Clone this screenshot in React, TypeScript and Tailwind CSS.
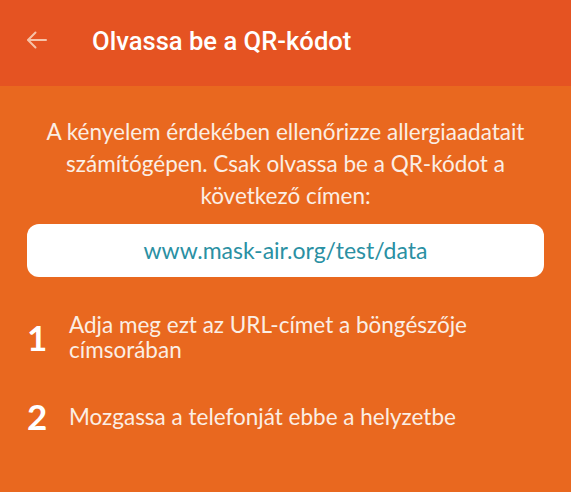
import React from "react";

export default function App() {
  return (
    <div className="w-[571px] h-[492px] overflow-hidden bg-[#e9681f] flex flex-col" style={{ fontFamily: "Lato, 'Noto Sans', sans-serif" }}>
      <div className="h-[86px] bg-[#e55322] flex items-center shrink-0">
        <div className="w-[92px] pl-[25px] pb-[6px] flex items-center">
          <svg width="24" height="24" viewBox="0 0 24 24" fill="none" stroke="#f6c2a8" strokeWidth="2" strokeLinecap="round" strokeLinejoin="round">
            <path d="M21 12H3.5" />
            <path d="M10.5 4.5L3 12l7.5 7.5" />
          </svg>
        </div>
        <div className="text-white text-[25.6px] font-medium pb-[3px]" style={{ fontFamily: "Roboto, sans-serif" }}>
          Olvassa be a QR-kódot
        </div>
      </div>
      <div className="px-[27px] pt-[30px] flex flex-col">
        <p className="text-center text-[#fbeee4] text-[22.5px] leading-[32px]">
          A kényelem érdekében ellenőrizze allergiaadatait
          <br />
          számítógépen. Csak olvassa be a QR-kódot a
          <br />
          következő címen:
        </p>
        <div className="mt-[12px] h-[53px] bg-white rounded-[12px] flex items-center justify-center text-[23px] text-[#2a90a3]">
          www.mask-air.org/test/data
        </div>
        <div className="mt-[35px] flex items-center gap-[20px]">
          <div className="w-[22px] text-white text-[35px] font-bold leading-none">1</div>
          <div className="text-[#fbeee4] text-[22.5px] leading-[25px]">
            Adja meg ezt az URL-címet a böngészője
            <br />
            címsorában
          </div>
        </div>
        <div className="mt-[37px] flex items-center gap-[20px]">
          <div className="w-[22px] text-white text-[35px] font-bold leading-none">2</div>
          <div className="text-[#fbeee4] text-[22.5px] leading-[25px]">Mozgassa a telefonját ebbe a helyzetbe</div>
        </div>
      </div>
    </div>
  );
}
